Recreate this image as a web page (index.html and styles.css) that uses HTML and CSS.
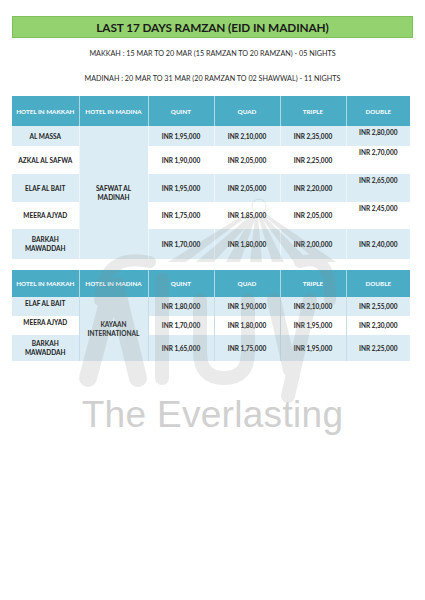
FILE: index.html
```html
<!DOCTYPE html>
<html>
<head>
<meta charset="utf-8">
<link rel="stylesheet" href="styles.css">
</head>
<body>
<div class="page">
  <div class="title">LAST 17 DAYS RAMZAN (EID IN MADINAH)</div>
  <p class="sub sub1">MAKKAH : 15 MAR TO 20 MAR (15 RAMZAN TO 20 RAMZAN) - 05 NIGHTS</p>
  <p class="sub sub2">MADINAH : 20 MAR TO 31 MAR (20 RAMZAN TO 02 SHAWWAL) - 11 NIGHTS</p>

  <table class="rates t1">
    <colgroup><col class="c1"><col class="c2"><col class="c3"><col class="c4"><col class="c5"><col class="c6"></colgroup>
    <thead>
      <tr class="head"><th>HOTEL IN MAKKAH</th><th>HOTEL IN MADINA</th><th>QUINT</th><th>QUAD</th><th>TRIPLE</th><th>DOUBLE</th></tr>
    </thead>
    <tbody>
      <tr class="alt r1"><td>AL MASSA</td><td rowspan="5" class="merged">SAFWAT AL<br>MADINAH</td><td>INR 1,95,000</td><td>INR 2,10,000</td><td>INR 2,35,000</td><td class="top">INR 2,80,000</td></tr>
      <tr class="plain r2"><td>AZKAL AL SAFWA</td><td>INR 1,90,000</td><td>INR 2,05,000</td><td>INR 2,25,000</td><td class="top">INR 2,70,000</td></tr>
      <tr class="alt r3"><td>ELAF AL BAIT</td><td>INR 1,95,000</td><td>INR 2,05,000</td><td>INR 2,20,000</td><td class="top">INR 2,65,000</td></tr>
      <tr class="plain r4"><td>MEERA AJYAD</td><td>INR 1,75,000</td><td>INR 1,85,000</td><td>INR 2,05,000</td><td class="top">INR 2,45,000</td></tr>
      <tr class="alt r5"><td>BARKAH<br>MAWADDAH</td><td>INR 1,70,000</td><td>INR 1,80,000</td><td>INR 2,00,000</td><td>INR 2,40,000</td></tr>
    </tbody>
  </table>

  <table class="rates t2">
    <colgroup><col class="c1"><col class="c2"><col class="c3"><col class="c4"><col class="c5"><col class="c6"></colgroup>
    <thead>
      <tr class="head"><th>HOTEL IN MAKKAH</th><th>HOTEL IN MADINA</th><th>QUINT</th><th>QUAD</th><th>TRIPLE</th><th>DOUBLE</th></tr>
    </thead>
    <tbody>
      <tr class="alt s1"><td class="top">ELAF AL BAIT</td><td rowspan="3" class="merged">KAYAAN<br>INTERNATIONAL</td><td>INR 1,80,000</td><td>INR 1,90,000</td><td>INR 2,10,000</td><td>INR 2,55,000</td></tr>
      <tr class="plain s2"><td class="top">MEERA AJYAD</td><td>INR 1,70,000</td><td>INR 1,80,000</td><td>INR 1,95,000</td><td>INR 2,30,000</td></tr>
      <tr class="alt s3"><td>BARKAH<br>MAWADDAH</td><td>INR 1,65,000</td><td>INR 1,75,000</td><td>INR 1,95,000</td><td>INR 2,25,000</td></tr>
    </tbody>
  </table>

  <div class="brand">The Everlasting</div>

  <svg class="watermark" width="425" height="600" viewBox="0 0 425 600" aria-hidden="true">
    <g fill="#8a8a8a">
      <polygon points="256,216 250,216 196,262 214,262"/>
      <polygon points="256,216 252,216 226,262 240,262"/>
      <polygon points="258,216 255,216 250,262 262,262"/>
      <polygon points="261,216 258,216 272,262 284,262"/>
      <polygon points="264,216 260,216 294,262 310,262"/>
      <polygon points="250,214 245,214 168,262 186,262"/>
      <polygon points="266,214 262,214 318,262 336,262"/>
    </g>
    <circle cx="259" cy="206" r="7" fill="none" stroke="#8a8a8a" stroke-width="1"/>
    <g fill="none" stroke="#8a8a8a" stroke-linecap="round">
      <path d="M88 378 L114 280 L138 378" stroke-width="18"/>
      <path d="M162 280 L162 378" stroke-width="14"/>
      <path d="M200 300 L200 352 Q200 378 224 378 Q248 378 248 352 L248 300" stroke-width="14"/>
      <path d="M274 300 L290 370 M310 300 L288 396" stroke-width="14"/>
      <path d="M100 300 Q104 252 150 262" stroke-width="12"/>
      <path d="M330 300 Q332 252 300 262" stroke-width="12"/>
    </g>
  </svg>
</div>
</body>
</html>
```

FILE: styles.css
```css
html, body {
  margin: 0;
  padding: 0;
  background: #ffffff;
}

.page {
  position: relative;
  width: 425px;
  height: 600px;
  padding: 16px 12px 0;
  box-sizing: border-box;
  font-family: Lato, "Open Sans", sans-serif;
  color: #1e1e1e;
  overflow: hidden;
}

.title {
  height: 22px;
  line-height: 21px;
  background: #93d26e;
  border: 1px solid #7fbf5c;
  box-sizing: border-box;
  text-align: center;
  font-weight: 700;
  font-size: 11.8px;
  color: #1b1b1b;
  letter-spacing: -0.1px;
}

.sub {
  margin: 0;
  text-align: center;
  font-size: 7.2px;
  color: #2a2a2a;
  line-height: 10px;
}

.sub1 { margin-top: 11px; }
.sub2 { margin-top: 15px; }

.rates {
  position: relative;
  z-index: 1;
  width: 398px;
  border-collapse: collapse;
  table-layout: fixed;
  font-size: 6.5px;
  font-weight: 700;
  color: #222222;
}

.t1 { margin-top: 12px; }
.t2 { margin-top: 11px; }

.c1 { width: 67px; }
.c2 { width: 69px; }
.c3 { width: 66px; }
.c4 { width: 66px; }
.c5 { width: 66px; }
.c6 { width: 64px; }

.rates th,
.rates td {
  padding: 0 2px;
  text-align: center;
  vertical-align: middle;
  line-height: 9px;
  border-left: 1px solid rgba(255, 255, 255, 0.55);
}

.rates th:first-child,
.rates td:first-child { border-left: none; }

.head th {
  background: #4bacc6;
  color: #ffffff;
  font-weight: 700;
  font-size: 6.3px;
}

.t1 .head { height: 30px; }
.t2 .head { height: 27px; }

.alt td { background: #dcecf4; }
.plain td { background: #ffffff; }
.rates td.merged { background: #dcecf4; }

.rates td.top {
  vertical-align: top;
  padding-top: 2px;
}

.t1 .r1 { height: 20px; }
.t1 .r2 { height: 28px; }
.t1 .r3 { height: 28px; }
.t1 .r4 { height: 27px; }
.t1 .r5 { height: 30px; }

.t2 td { border-left-color: #c8dde8; }
.t2 .s1 { height: 19px; }
.t2 .s2 { height: 19px; }
.t2 .s3 { height: 26px; }

.brand {
  margin-top: 33px;
  text-align: center;
  font-family: "Liberation Sans", Arial, sans-serif;
  font-size: 37px;
  line-height: 42px;
  color: #d0d0d0;
  letter-spacing: 0.3px;
}

.watermark {
  position: absolute;
  left: 0;
  top: 0;
  z-index: 2;
  opacity: 0.17;
  pointer-events: none;
}
```
